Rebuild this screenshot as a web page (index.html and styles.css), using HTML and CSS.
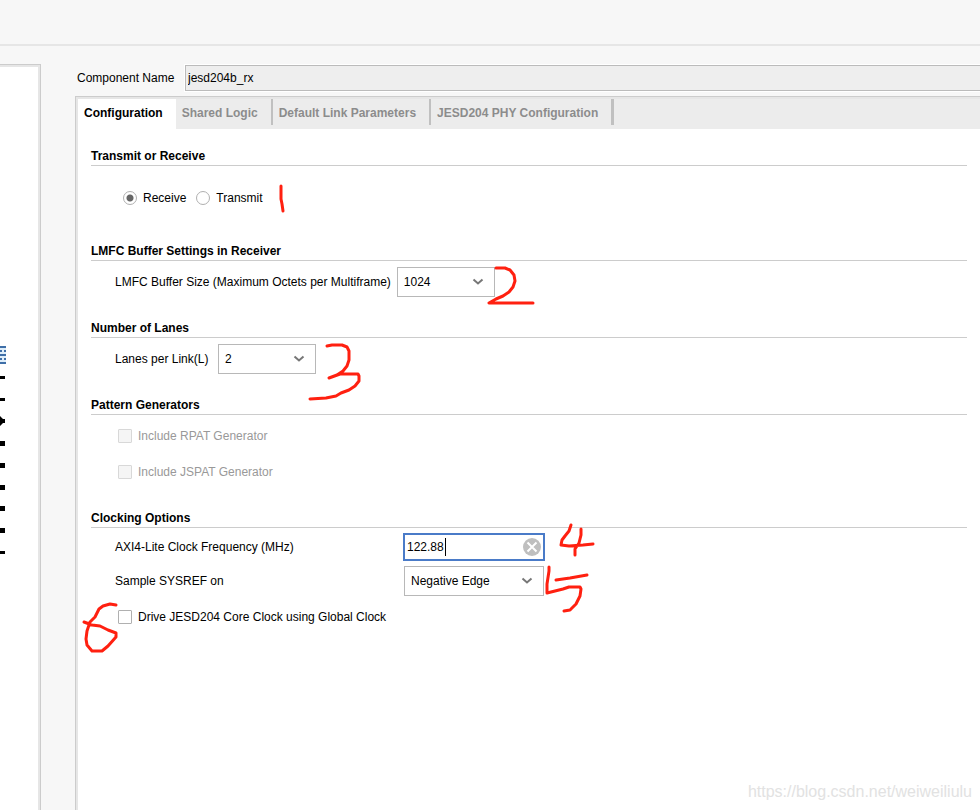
FILE: index.html
```html
<!DOCTYPE html>
<html lang="en">
<head>
    <meta charset="utf-8">
    <meta name="viewport" content="width=device-width, initial-scale=1.0" />
    <title>jesd204b_rx</title>
    <link rel="stylesheet" href="styles.css">
</head>
<body>
	<header class="topbar"></header>
	<div class="main">
		<div class="symbol">
			<svg class="pins" width="6" height="208" viewBox="0 346 6 208">
				<path fill="#dfeefa" d="M0 346h6v18h-6z"/>
				<path fill="#3f6fa8" d="M0 346h6v2h-6zM0 354h6v2h-6zM0 362h6v2h-6zM0 350h2v2h-2zM4 350h2v2h-2zM0 358h2v2h-2zM4 358h2v2h-2z"/>
				<path d="M0 376h5v3h-5zM0 398h5v3h-5zM0 416l3 3h2v4h-2l-3 3zM0 441h5v5h-5zM0 463h5v5h-5zM0 485h5v5h-5zM0 506h5v5h-5zM0 528h5v5h-5zM0 551h5v3h-5z"/>
			</svg>
		</div>

		<div class="settings">
			<div class="component">
				<label for="component">Component Name</label>
				<input id="component" class="component-name" type="text" value="jesd204b_rx" readonly>
			</div>

			<div class="panel">
				<nav class="tabs">
					<button class="tab active" type="button">Configuration</button>
					<button class="tab" type="button">Shared Logic</button>
					<button class="tab" type="button">Default Link Parameters</button>
					<button class="tab" type="button">JESD204 PHY Configuration</button>
				</nav>

				<form class="content">
					<section class="group">
						<h2>Transmit or Receive</h2>
						<div class="row radios">
							<label class="option"><input type="radio" name="dir" checked>Receive</label>
							<label class="option"><input type="radio" name="dir">Transmit</label>
						</div>
					</section>

					<section class="group">
						<h2>LMFC Buffer Settings in Receiver</h2>
						<div class="row">
							<label for="lmfc">LMFC Buffer Size (Maximum Octets per Multiframe)</label>
							<div class="select">
								<select id="lmfc"><option>1024</option></select>
								<svg class="arrow" width="12" height="8" viewBox="0 0 12 8"><path d="M1.5 1.5l4.5 4 4.5-4"/></svg>
							</div>
						</div>
					</section>

					<section class="group">
						<h2>Number of Lanes</h2>
						<div class="row">
							<label for="lanes">Lanes per Link(L)</label>
							<div class="select">
								<select id="lanes"><option>2</option></select>
								<svg class="arrow" width="12" height="8" viewBox="0 0 12 8"><path d="M1.5 1.5l4.5 4 4.5-4"/></svg>
							</div>
						</div>
					</section>

					<section class="group">
						<h2>Pattern Generators</h2>
						<div class="row check">
							<label class="option disabled"><input type="checkbox" disabled>Include RPAT Generator</label>
						</div>
						<div class="row check">
							<label class="option disabled"><input type="checkbox" disabled>Include JSPAT Generator</label>
						</div>
					</section>

					<section class="group">
						<h2>Clocking Options</h2>
						<div class="row clock">
							<label for="freq">AXI4-Lite Clock Frequency (MHz)</label>
							<div class="edit">
								<input id="freq" type="text" value="122.88">
								<span class="caret"></span>
								<button class="clear" type="button" aria-label="Clear">
									<svg width="18" height="18" viewBox="0 0 18 18"><circle cx="9" cy="9" r="9" fill="#bfbfbf"/><path d="M4.5 4.5l9 9M13.5 4.5l-9 9" stroke="#fff" stroke-width="2"/></svg>
								</button>
							</div>
						</div>
						<div class="row clock">
							<label for="sysref">Sample SYSREF on</label>
							<div class="select wide">
								<select id="sysref"><option>Negative Edge</option></select>
								<svg class="arrow" width="12" height="8" viewBox="0 0 12 8"><path d="M1.5 1.5l4.5 4 4.5-4"/></svg>
							</div>
						</div>
						<div class="row check">
							<label class="option"><input type="checkbox">Drive JESD204 Core Clock using Global Clock</label>
						</div>
					</section>
				</form>
			</div>
		</div>
	</div>

	<!-- handwritten step marks -->
	<svg class="marks" width="620" height="660" viewBox="0 0 620 660">
		<path d="M281 186v13l1 5 1 7"/>
		<path d="M496 268h9l5 2 4 5 1 6-2 6-4 5-6 4-7 3-7 4h44"/>
		<path d="M327 346l5-1h10l5 2 2 4v9l-2 6-4 5-6 4-8 3 11-4h18l1 2v5l-4 5-6 4-8 3-5 3-10 2-16 1"/>
		<path d="M571 525l-2 6-4 5-3 4-1 5 8 1 14-1 10-1M581 529v6l-2 8-4 6v6"/>
		<path d="M549 567v4l-2 13v9l8-2 8-2 6-2h11l1 2-1 7-4 8-6 6-6 1M556 580l14-2 17-3"/>
		<path d="M116 605l-6-1-7 2-4 3-4 8-5 5-3 9-1 8 1 6 5 6h10l6-5 8-9v-4l-8-3-8-4-8-1-8-3"/>
	</svg>
	<div class="watermark">https://blog.csdn.net/weiweiliulu</div>
</body>
</html>
```
FILE: styles.css
```css
*{box-sizing: border-box;}
body{
	display: flex;flex-direction: column;
	position: relative;
	min-height: 100vh;
	margin: 0;
	background: #f7f7f7;
	color: #000;
	font: 12px/16px "Liberation Sans", Arial, sans-serif;
}
input,select,button{font: inherit;color: inherit;margin: 0;}

.topbar{height: 46px;border-bottom: 2px solid #e6e6e6;}
.main{display: flex;flex: 1;}

/* left symbol view */
.symbol{
	flex: 0 0 41px;
	margin-top: 18px;
	background: #fff;
	border-top: 1px solid #ccc;
	border-right: 1px solid #ccc;
	box-shadow: inset -2px 2px 0 #e6e6e6;
}
.pins{display: block;margin-top: 281px;}

.settings{
	display: flex;flex-direction: column;flex: 1;
	min-width: 0;
	padding: 18px 0 0 34px;
}
.component{display: flex;align-items: center;padding-left: 2px;margin-bottom: 4px;}
.component label{width: 108px;white-space: nowrap;}
.component-name{
	flex: 1;
	min-width: 0;
	height: 26px;
	margin: 1px 0;
	padding: 0 2px;
	background: #eee;
	border: 1px solid #bbb;
	border-right: 0;
	outline: 1px solid #fff;
}

.panel{
	flex: 1;
	background: #fff;
	border-top: 1px solid #ccc;
	border-left: 1px solid #ccc;
	box-shadow: inset 2px 2px 0 #e6e6e6;
	padding: 2px 0 0 2px;
}
.tabs{display: flex;align-items: flex-start;height: 30px;background: #ececec;}
.tab{
	height: 26px;
	padding: 2px 13px 0 6px;
	background: none;
	border: 0;
	border-right: 2px solid #c0c0c0;
	color: #8c8c8c;
	font-weight: bold;
	white-space: nowrap;
}
.tab.active{
	height: 30px;
	padding-bottom: 4px;
	background: #fff;
	border: 0;
	color: #000;
}
.tab:last-child{border-right-width: 3px;}

.content{padding: 19px 13px 40px;}
.group{display: flex;flex-direction: column;gap: 6px;margin-bottom: 23px;}
.group h2{
	height: 18px;
	margin: 0;
	border-bottom: 1px solid #ccc;
	font-size: 12px;
	line-height: 16px;
}
.row{display: flex;align-items: center;gap: 6px;padding-left: 24px;}
.row > label{min-width: 97px;white-space: nowrap;}
.row.radios{height: 48px;padding: 4px 0 0 32px;gap: 10px;}
.row.radios > label{min-width: 0;}
.row.check{height: 30px;padding-left: 27px;}
.row.clock{gap: 0;}
.row.clock > label{flex: 0 0 289px;}

.option{display: flex;align-items: center;gap: 6px;}
.option input{
	appearance: none;
	width: 14px;
	height: 14px;
	background: #fff;
	border: 1px solid #b0b0b0;
}
.option input[type=checkbox]{border-radius: 1px;}
.option input[type=radio]{border-radius: 50%;}
.option input[type=radio]:checked{background: radial-gradient(circle, #666 3px, #fff 4px);}
.option.disabled{color: #999;}
.option.disabled input{background: #f5f5f5;border-color: #d8d8d8;}

.select{position: relative;width: 98px;}
.select.wide{width: 140px;}
.select select{
	appearance: none;
	display: block;
	width: 100%;
	height: 30px;
	padding: 0 6px;
	background: #fff;
	border: 1px solid #b8b8b8;
	border-radius: 0;
}
.arrow{position: absolute;right: 11px;top: 11px;pointer-events: none;}
.arrow path{fill: none;stroke: #777;stroke-width: 2;}

.edit{position: relative;width: 140px;}
.edit input{
	display: block;
	width: 100%;
	height: 26px;
	padding: 0 24px 0 2px;
	background: #fff;
	border: 1px solid #4a7bc8;
	outline: 1px solid #4a7bc8;
}
.caret{position: absolute;left: 41px;top: 4px;width: 1px;height: 18px;background: #000;}
.clear{position: absolute;right: 3px;top: 4px;width: 18px;height: 18px;padding: 0;background: none;border: 0;}
.clear svg{display: block;}

.marks{position: absolute;left: 0;top: 0;pointer-events: none;}
.marks path{fill: none;stroke: #ff2010;stroke-width: 3;stroke-linecap: round;stroke-linejoin: round;}
.watermark{
	position: absolute;
	right: 8px;
	bottom: 9px;
	color: #e2e2e2;
	font-size: 16px;
	line-height: 18px;
}
```
